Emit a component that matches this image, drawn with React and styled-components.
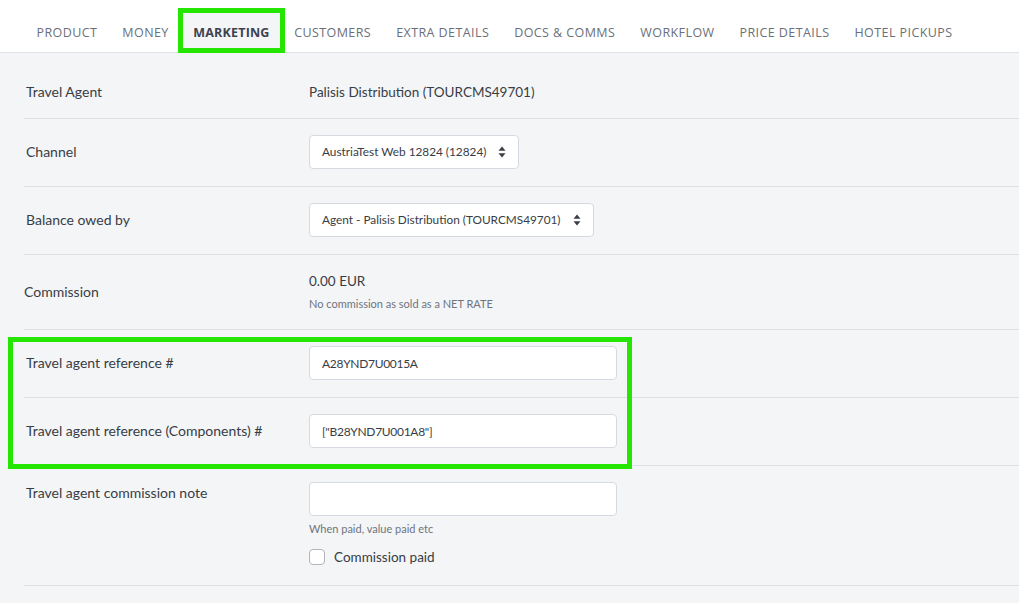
import React from 'react';
import styled, { createGlobalStyle } from 'styled-components';

const GREEN = '#24e600';

const tabs = [
  'Product',
  'Money',
  'Marketing',
  'Customers',
  'Extra details',
  'Docs & comms',
  'Workflow',
  'Price details',
  'Hotel pickups',
];

const GlobalStyle = createGlobalStyle`
  html, body {
    margin: 0;
    padding: 0;
    background: #f4f5f7;
  }
  body {
    font-family: Lato, "Open Sans", sans-serif;
    color: #383d45;
  }
`;

function SortCaret() {
  return (
    <Caret width="8" height="12" viewBox="0 0 8 12">
      <path d="M4 0.5 L7.5 4.8 L0.5 4.8 Z" fill="#3a3f47" />
      <path d="M4 11.5 L7.5 7.2 L0.5 7.2 Z" fill="#3a3f47" />
    </Caret>
  );
}

function Select({ children }) {
  return (
    <SelectBox>
      <span>{children}</span>
      <SortCaret />
    </SelectBox>
  );
}

function App() {
  return (
    <Page>
      <GlobalStyle />
      <TabBar>
        {tabs.map((t) => (
          <Tab key={t} active={t === 'Marketing'}>
            {t}
          </Tab>
        ))}
      </TabBar>

      <Content>
        <Row>
          <Label>Travel Agent</Label>
          <Value>Palisis Distribution (TOURCMS49701)</Value>
        </Row>
        <Row>
          <Label>Channel</Label>
          <Value>
            <Select>AustriaTest Web 12824 (12824)</Select>
          </Value>
        </Row>
        <Row>
          <Label>Balance owed by</Label>
          <Value>
            <Select>Agent - Palisis Distribution (TOURCMS49701)</Select>
          </Value>
        </Row>
        <Row>
          <Label shift>Commission</Label>
          <Value>
            <Amount>0.00 EUR</Amount>
            <Help>No commission as sold as a NET RATE</Help>
          </Value>
        </Row>

        <Highlight>
          <Row>
            <Label>Travel agent reference #</Label>
            <Value>
              <Input defaultValue="A28YND7U0015A" />
            </Value>
          </Row>
          <Row>
            <Label>Travel agent reference (Components) #</Label>
            <Value>
              <Input defaultValue={'["B28YND7U001A8"]'} />
            </Value>
          </Row>
        </Highlight>

        <Row top>
          <Label top>Travel agent commission note</Label>
          <Value>
            <Input defaultValue="" />
            <Help>When paid, value paid etc</Help>
            <CheckLine>
              <Check type="checkbox" />
              Commission paid
            </CheckLine>
          </Value>
        </Row>
      </Content>
    </Page>
  );
}

export default App;

const Page = styled.div`
  min-height: 603px;
  background: #f4f5f7;
`;

const TabBar = styled.nav`
  display: flex;
  align-items: flex-end;
  height: 52px;
  padding: 0 0 0 24px;
  background: #fff;
  border-bottom: 1px solid #dfe2e7;
`;

const Tab = styled.div`
  height: 35px;
  box-sizing: border-box;
  display: flex;
  align-items: center;
  padding: 3px ${(p) => (p.active ? '10.5px' : '12.5px')} 0;
  margin: 0 ${(p) => (p.active ? '1.5px' : '0')} 4px;
  font-family: "Open Sans", sans-serif;
  font-size: 12.5px;
  letter-spacing: ${(p) => (p.active ? '0.2px' : '0.42px')};
  text-transform: uppercase;
  white-space: nowrap;
  color: ${(p) => (p.active ? '#3c4350' : '#6a707a')};
  font-weight: ${(p) => (p.active ? 700 : 400)};
  background: ${(p) => (p.active ? '#f4f5f7' : 'transparent')};
  outline: ${(p) => (p.active ? `5px solid ${GREEN}` : 'none')};
`;

const Content = styled.div`
  padding: 14px 0 0 24px;
`;

const Row = styled.div`
  display: flex;
  align-items: ${(p) => (p.top ? 'flex-start' : 'center')};
  padding: 16px 0 ${(p) => (p.top ? '19px' : '17px')};
  border-bottom: 1px solid #dcdfe4;
  font-size: 13.5px;
  line-height: 18px;
`;

const Label = styled.div`
  width: 285px;
  box-sizing: border-box;
  flex-shrink: 0;
  padding-left: ${(p) => (p.shift ? '0' : '2px')};
  margin-top: ${(p) => (p.top ? '2px' : '0')};
  font-size: 14px;
  color: #383d45;
`;

const Value = styled.div`
  display: flex;
  flex-direction: column;
  align-items: flex-start;
  color: #383d45;
`;

const Highlight = styled.div`
  position: relative;

  &::after {
    content: '';
    position: absolute;
    top: 7px;
    left: -16px;
    width: 624px;
    bottom: -3px;
    box-sizing: border-box;
    border: 5px solid ${GREEN};
    pointer-events: none;
  }
`;

const SelectBox = styled.div`
  display: flex;
  align-items: center;
  gap: 12px;
  height: 34px;
  box-sizing: border-box;
  padding: 0 12px;
  background: #fff;
  border: 1px solid #d6dae0;
  border-radius: 4px;
  font-size: 11.8px;
  color: #383d45;
`;

const Caret = styled.svg`
  flex-shrink: 0;
`;

const Input = styled.input`
  width: 308px;
  height: 34px;
  box-sizing: border-box;
  padding: 0 12px;
  background: #fff;
  border: 1px solid #d6dae0;
  border-radius: 4px;
  font-family: Lato, sans-serif;
  font-size: 12px;
  letter-spacing: -0.3px;
  color: #383d45;
  outline: none;
`;

const Amount = styled.div`
  font-size: 13.5px;
  line-height: 20px;
`;

const Help = styled.div`
  margin-top: 5px;
  font-size: 11px;
  line-height: 16px;
  color: #6e747d;
`;

const CheckLine = styled.label`
  display: flex;
  align-items: center;
  gap: 9px;
  margin-top: 11px;
  font-size: 13.5px;
  color: #383d45;
`;

const Check = styled.input`
  appearance: none;
  width: 16px;
  height: 16px;
  margin: 0;
  border: 1px solid #b0b5bc;
  border-radius: 4px;
  background: #fff;
`;
